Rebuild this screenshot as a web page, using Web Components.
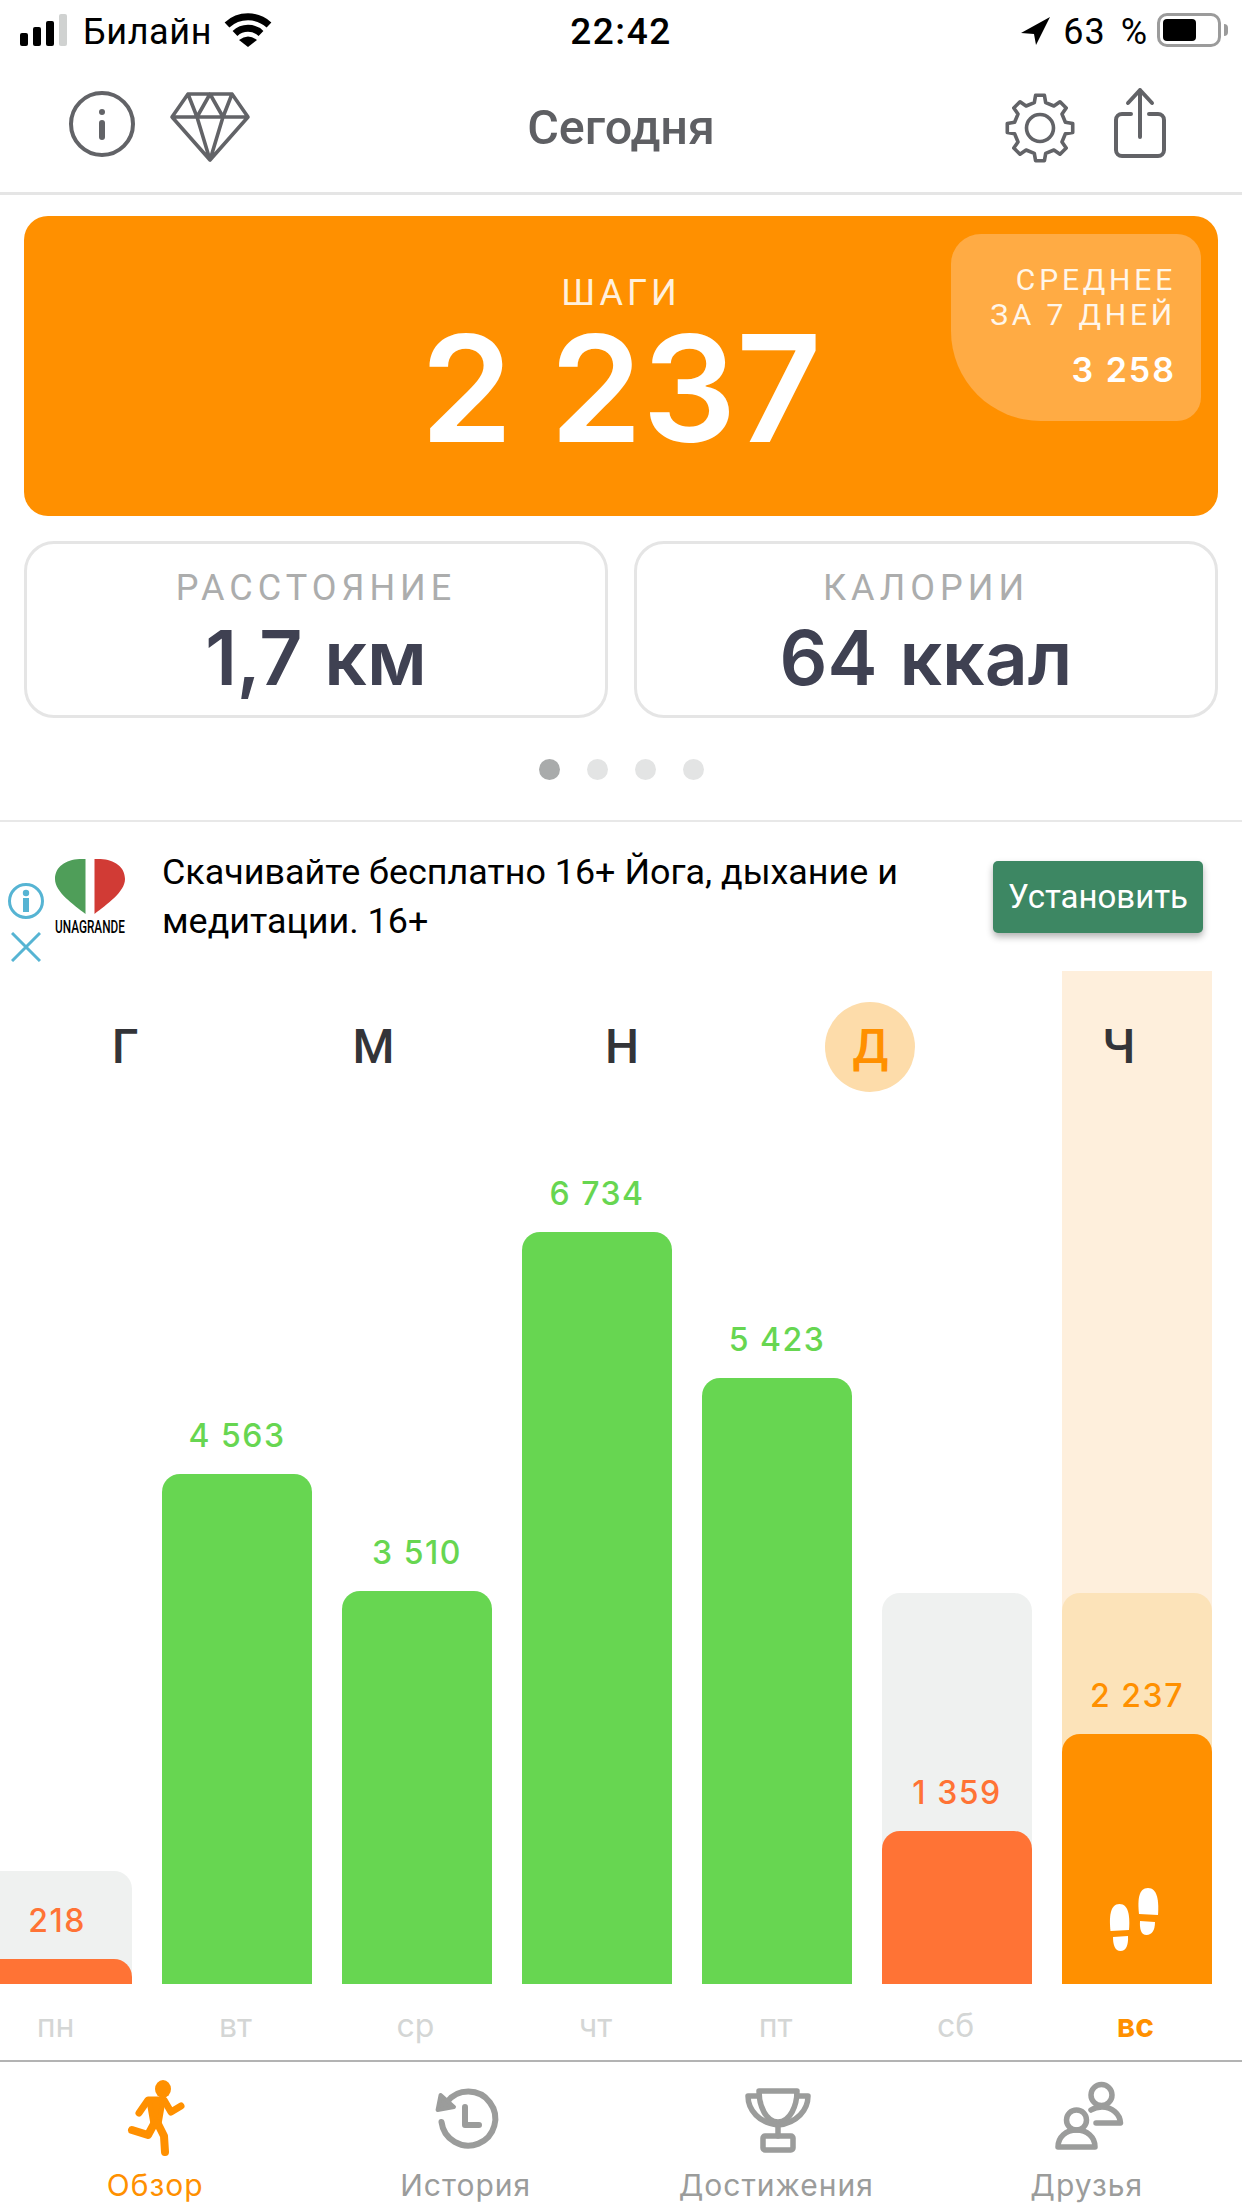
<!DOCTYPE html>
<html lang="ru">
<head>
<meta charset="utf-8">
<title>Сегодня</title>
<style>
  html, body { margin: 0; padding: 0; background: #fff; }
  body { width: 1242px; height: 2208px; overflow: hidden; font-family: Roboto, "Liberation Sans", sans-serif; }
  .stats { display: grid; grid-template-columns: 584px 584px; gap: 26px; padding: 25px 24px 0; }
</style>
</head>
<body>
<status-bar></status-bar>
<nav-bar title="Сегодня"></nav-bar>
<step-card value="2 237" avg="3 258"></step-card>
<div class="stats">
  <stat-card label="РАССТОЯНИЕ" value="1,7 км"></stat-card>
  <stat-card label="КАЛОРИИ" value="64 ккал"></stat-card>
</div>
<pager-dots count="4"></pager-dots>
<ad-banner></ad-banner>
<week-chart>
  <day-col kind="low" value="218" goal="113" bar="25"></day-col>
  <day-col kind="ok" value="4 563" bar="510"></day-col>
  <day-col kind="ok" value="3 510" bar="393"></day-col>
  <day-col kind="ok" value="6 734" bar="752"></day-col>
  <day-col kind="ok" value="5 423" bar="606"></day-col>
  <day-col kind="low" value="1 359" goal="391" bar="153"></day-col>
  <day-col kind="today" value="2 237" goal="391" bar="250"></day-col>
</week-chart>
<day-labels></day-labels>
<tab-bar>
  <tab-item label="Обзор" icon="run" active></tab-item>
  <tab-item label="История" icon="history"></tab-item>
  <tab-item label="Достижения" icon="cup"></tab-item>
  <tab-item label="Друзья" icon="friends"></tab-item>
</tab-bar>

<script>
const UI_FONT = 'Roboto, "Liberation Sans", sans-serif';
const NUM_FONT = 'Inter, Roboto, sans-serif';

class StatusBar extends HTMLElement {
  connectedCallback() {
    this.attachShadow({ mode: 'open' });
    this.shadowRoot.innerHTML = `
      <style>
        :host { display: grid; grid-template-columns: 1fr auto 1fr; height: 60px; align-items: start; font-family: ${UI_FONT}; color: #000; }
        .left, .right { display: flex; align-items: flex-start; height: 60px; }
        .left { padding-left: 20px; }
        .right { justify-content: flex-end; padding-right: 14px; }
        .bars { display: flex; align-items: flex-end; gap: 5px; height: 32px; margin-top: 14px; }
        .bars i { display: block; width: 8px; background: #000; border-radius: 2px; }
        .bars i:last-child { background: #d0d2d1; }
        .carrier { font-size: 36px; line-height: 42px; margin: 11px 0 0 16px; letter-spacing: .6px; }
        .wifi { margin: 11px 0 0 12px; }
        .time { font-size: 37px; font-weight: 500; line-height: 42px; margin-top: 11px; letter-spacing: 1.500px; }
        .loc { margin: 15px 12px 0 0; }
        .pct { font-size: 36px; line-height: 42px; margin: 11px 9px 0 0; letter-spacing: 1px; word-spacing: 5px; }
        .batt { box-sizing: border-box; width: 64px; height: 34px; margin-top: 13px; border: 3px solid #9b9b9b; border-radius: 10px; padding: 3px; }
        .batt b { display: block; width: 33px; height: 22px; background: #000; border-radius: 4px; }
        .nub { width: 4px; height: 12px; margin: 24px 0 0 3px; background: #9b9b9b; border-radius: 0 6px 6px 0; }
      </style>
      <div class="left">
        <div class="bars"><i style="height:13px"></i><i style="height:19px"></i><i style="height:25px"></i><i style="height:32px"></i></div>
        <span class="carrier">Билайн</span>
        <svg class="wifi" width="48" height="38" viewBox="0 0 48 38">
          <path d="M3 14A31 31 0 0 1 45 14M11 22.500A19 19 0 0 1 37 22.500" fill="none" stroke="#000" stroke-width="7"/>
          <path d="M15 29Q24 22 33 29L24 36Z" fill="#000"/>
        </svg>
      </div>
      <div class="time">22:42</div>
      <div class="right">
        <svg class="loc" width="32" height="32" viewBox="0 0 32 32"><path d="M31 2L2 18L15 19L17 30Z" fill="#000"/></svg>
        <span class="pct">63 %</span>
        <div class="batt"><b></b></div><div class="nub"></div>
      </div>`;
  }
}
customElements.define('status-bar', StatusBar);

function gearPath(cx, cy, rIn, rOut, teeth) {
  const step = Math.PI * 2 / teeth;
  let d = '';
  for (let i = 0; i < teeth; i++) {
    const a = i * step - Math.PI / 2;
    const pts = [[rIn, a - step * .28], [rOut, a - step * .17], [rOut, a + step * .17], [rIn, a + step * .28]];
    pts.forEach(([r, t], n) => {
      const x = (cx + r * Math.cos(t)).toFixed(1), y = (cy + r * Math.sin(t)).toFixed(1);
      d += (i === 0 && n === 0 ? 'M' : 'L') + x + ' ' + y;
    });
  }
  return d + 'Z';
}

class NavBar extends HTMLElement {
  connectedCallback() {
    this.attachShadow({ mode: 'open' });
    this.shadowRoot.innerHTML = `
      <style>
        :host { display: block; box-sizing: border-box; height: 135px; border-bottom: 3px solid #e5e5e5; font-family: ${UI_FONT}; color: #5e5f63; }
        .row { display: grid; grid-template-columns: 1fr auto 1fr; height: 132px; }
        .title { font-size: 48.500px; font-weight: 500; line-height: 132px; margin-top: 2px; }
        .l, .r { display: flex; align-items: flex-start; }
        .l { padding: 31px 0 0 68px; gap: 32px; }
        .r { justify-content: flex-end; padding: 26px 74px 0 0; gap: 36px; }
        svg { display: block; fill: none; stroke: #626367; stroke-linecap: round; stroke-linejoin: round; }
      </style>
      <div class="row">
        <div class="l">
          <svg width="68" height="68" viewBox="0 0 68 68" stroke-width="4">
            <circle cx="34" cy="33" r="31"/>
            <circle cx="34" cy="21" r="3" fill="#626367" stroke="none"/>
            <path d="M34 32V46" stroke-width="6"/>
          </svg>
          <svg width="84" height="72" viewBox="0 0 84 72" stroke-width="3.600">
            <path d="M20 3H64L80 26L42 69L4 26ZM4 26H80M20 3L29 26L42 3L55 26L64 3M29 26L42 69L55 26"/>
          </svg>
        </div>
        <div class="title">${this.getAttribute('title')}</div>
        <div class="r">
          <svg style="margin-top:6px" width="72" height="72" viewBox="0 0 72 72" stroke-width="3.600">
            <path d="${gearPath(36, 36, 26, 33, 8)}"/>
            <circle cx="36" cy="36" r="13.500"/>
          </svg>
          <svg width="56" height="74" viewBox="0 0 56 74" stroke-width="4">
            <path d="M28 4V51M16 17L28 4L40 17"/>
            <path d="M19 28H10A6 6 0 0 0 4 34V64A6 6 0 0 0 10 70H46A6 6 0 0 0 52 64V34A6 6 0 0 0 46 28H37"/>
          </svg>
        </div>
      </div>`;
  }
}
customElements.define('nav-bar', NavBar);

class StepCard extends HTMLElement {
  connectedCallback() {
    this.attachShadow({ mode: 'open' });
    this.shadowRoot.innerHTML = `
      <style>
        :host { display: block; position: relative; box-sizing: border-box; height: 300px; margin: 21px 24px 0; background: #ff9000; border-radius: 24px; color: #fff; font-family: ${NUM_FONT}; text-align: center; }
        .cap { padding-top: 57px; font-size: 36px; line-height: 40px; letter-spacing: 4px; color: #fff0dd; font-family: ${UI_FONT}; }
        .num { font-size: 148px; line-height: 150px; font-weight: 600; margin-top: 1px; }
        .avg { position: absolute; box-sizing: border-box; top: 18px; right: 17px; width: 250px; height: 187px; background: #ffab44; border-radius: 30px 24px 24px 90px; padding: 28px 25px 0 0; text-align: right; font-family: ${UI_FONT}; font-size: 30px; line-height: 35px; letter-spacing: 3.800px; color: #fff6ea; }
        .avg b { display: block; margin-top: 18px; font-size: 34px; line-height: 40px; font-weight: 600; letter-spacing: 2px; color: #fff; font-family: ${NUM_FONT}; }
      </style>
      <div class="cap">ШАГИ</div>
      <div class="num">${this.getAttribute('value')}</div>
      <div class="avg">СРЕДНЕЕ<br>ЗА 7 ДНЕЙ<b>${this.getAttribute('avg')}</b></div>`;
  }
}
customElements.define('step-card', StepCard);

class StatCard extends HTMLElement {
  connectedCallback() {
    this.attachShadow({ mode: 'open' });
    this.shadowRoot.innerHTML = `
      <style>
        :host { display: block; box-sizing: border-box; height: 177px; border: 3px solid #e5e5e5; border-radius: 30px; text-align: center; font-family: ${UI_FONT}; }
        .l { padding-top: 23px; font-size: 36px; line-height: 42px; letter-spacing: 5px; color: #acadad; }
        .v { font-family: ${NUM_FONT}; font-size: 75px; font-weight: 600; line-height: 90px; margin-top: 4px; color: #3f4152; word-spacing: 3px; }
      </style>
      <div class="l">${this.getAttribute('label')}</div>
      <div class="v">${this.getAttribute('value')}</div>`;
  }
}
customElements.define('stat-card', StatCard);

class PagerDots extends HTMLElement {
  connectedCallback() {
    this.attachShadow({ mode: 'open' });
    const n = parseInt(this.getAttribute('count') || '4', 10);
    this.shadowRoot.innerHTML = `
      <style>
        :host { display: flex; justify-content: center; gap: 27px; box-sizing: border-box; height: 104px; padding-top: 41px; border-bottom: 2px solid #e8e8e8; }
        i { display: block; width: 21px; height: 21px; border-radius: 50%; background: #e3e4e4; }
        i:first-of-type { background: #a9abab; }
      </style>
      ${'<i></i>'.repeat(n)}`;
  }
}
customElements.define('pager-dots', PagerDots);

class AdBanner extends HTMLElement {
  connectedCallback() {
    this.attachShadow({ mode: 'open' });
    this.shadowRoot.innerHTML = `
      <style>
        :host { display: flex; box-sizing: border-box; height: 149px; font-family: ${UI_FONT}; color: #000; }
        .side { flex: none; width: 55px; padding: 61px 0 0 8px; box-sizing: border-box; }
        svg { display: block; }
        .logo { flex: none; width: 107px; padding-top: 37px; box-sizing: border-box; }
        .logo span { display: block; width: 70px; margin-top: 3px; font-size: 19px; line-height: 20px; font-weight: 500; white-space: nowrap; transform: scaleX(.62); transform-origin: left center; }
        .txt { flex: none; width: 770px; padding-top: 26px; font-size: 35.900px; line-height: 49px; }
        .btn { flex: none; margin: 39px 0 0 61px; width: 210px; height: 72px; box-sizing: border-box; background: #3d8763; color: #fff; border-radius: 5px; text-align: center; font-size: 33px; line-height: 72px; box-shadow: 0 4px 7px rgba(0,0,0,.3); }
      </style>
      <div class="side">
        <svg width="36" height="36" viewBox="0 0 36 36"><circle cx="18" cy="18" r="16.500" fill="none" stroke="#56b4d3" stroke-width="3"/><circle cx="18" cy="10" r="3.200" fill="#56b4d3"/><rect x="15" y="15" width="6" height="14" fill="#56b4d3"/></svg>
        <svg style="margin:13px 0 0 3px" width="30" height="30" viewBox="0 0 30 30"><path d="M1 1L29 29M29 1L1 29" stroke="#56b4d3" stroke-width="3"/></svg>
      </div>
      <div class="logo">
        <svg width="70" height="55" viewBox="0 0 70 55"><path d="M30.500 0C14 -1 0 6 0 20C0 33 18 45 30.500 55Z" fill="#4f9e59"/><path d="M39.500 0C56 -1 70 6 70 20C70 33 52 45 39.500 55Z" fill="#d13b35"/></svg>
        <span>UNAGRANDE</span>
      </div>
      <div class="txt">Скачивайте бесплатно 16+ Йога, дыхание и медитации. 16+</div>
      <div class="btn">Установить</div>`;
  }
}
customElements.define('ad-banner', AdBanner);

class WeekChart extends HTMLElement {
  connectedCallback() {
    this.attachShadow({ mode: 'open' });
    const letters = ['Г', 'М', 'Н', 'Д', 'Ч'];
    this.shadowRoot.innerHTML = `
      <style>
        :host { display: block; position: relative; height: 1013px; overflow: hidden; font-family: ${UI_FONT}; }
        .cols { display: grid; grid-template-columns: repeat(7, 150px); gap: 30px; height: 100%; margin-left: -18px; }
        .letters { position: absolute; top: 31px; left: 1px; right: -1px; display: grid; grid-template-columns: repeat(5, 1fr); justify-items: center; font-size: 48px; font-weight: 500; line-height: 90px; color: #333438; }
        .letters span { display: block; width: 90px; height: 90px; text-align: center; border-radius: 50%; }
        .letters .on { background: #fddcaa; color: #ff9000; }
      </style>
      <div class="cols"><slot></slot></div>
      <div class="letters">${letters.map(l => `<span class="${l === 'Д' ? 'on' : ''}">${l}</span>`).join('')}</div>`;
  }
}
customElements.define('week-chart', WeekChart);

class DayCol extends HTMLElement {
  connectedCallback() {
    this.attachShadow({ mode: 'open' });
    const kind = this.getAttribute('kind');
    const goal = this.getAttribute('goal');
    const bar = this.getAttribute('bar');
    const colors = {
      ok: ['#67d651', 'transparent', 'transparent'],
      low: ['#ff7335', '#eff1f0', 'transparent'],
      today: ['#ff9000', '#fce3b9', '#feefdc'],
    }[kind];
    this.shadowRoot.innerHTML = `
      <style>
        :host { display: flex; flex-direction: column; justify-content: flex-end; height: 100%; background: ${colors[2]}; font-family: ${NUM_FONT}; }
        .goal { display: flex; flex-direction: column; justify-content: flex-end; background: ${colors[1]}; border-radius: 18px 18px 0 0; ${goal ? `height:${goal}px;` : ''} }
        .val { text-align: center; font-size: 32px; line-height: 40px; margin-bottom: 18px; letter-spacing: 1.500px; font-weight: 500; color: ${colors[0]}; }
        .bar { position: relative; height: ${bar}px; background: ${colors[0]}; border-radius: 18px 18px 0 0; }
        svg { position: absolute; left: 47px; bottom: 32px; }
      </style>
      <div class="goal">
        <div class="val">${this.getAttribute('value')}</div>
        <div class="bar">${kind === 'today' ? `
          <svg width="50" height="65" viewBox="0 0 50 65" fill="#fff">
            <path d="M1.500 44C0 30 1 17 10.500 17C20 17 21 30 20 43Z"/>
            <path d="M4 50L19 49C19.500 58 17 64 11.500 64C6 64 4 58 4 50Z"/>
            <path d="M30 27C28.500 13 29.500 1 39 1C48.500 1 50 14 49 28Z"/>
            <path d="M31 34L46 35C46 43 43 48 37.500 48C32 48 30.500 42 31 34Z"/>
          </svg>` : ''}</div>
      </div>`;
  }
}
customElements.define('day-col', DayCol);

class DayLabels extends HTMLElement {
  connectedCallback() {
    this.attachShadow({ mode: 'open' });
    const days = ['пн', 'вт', 'ср', 'чт', 'пт', 'сб', 'вс'];
    this.shadowRoot.innerHTML = `
      <style>
        :host { display: grid; grid-template-columns: repeat(7, 150px); gap: 30px; margin-left: -18px; box-sizing: border-box; height: 76px; font-family: ${NUM_FONT}; font-size: 32px; line-height: 84px; color: #d4d6d5; text-align: center; }
        span { padding-right: 3px; }
        span:last-child { color: #ff9000; font-weight: 700; }
      </style>
      ${days.map(d => `<span>${d}</span>`).join('')}`;
  }
}
customElements.define('day-labels', DayLabels);

class TabBar extends HTMLElement {
  connectedCallback() {
    this.attachShadow({ mode: 'open' });
    this.shadowRoot.innerHTML = `
      <style>
        :host { display: grid; grid-template-columns: repeat(4, 1fr); box-sizing: border-box; height: 148px; border-top: 2px solid #b3b3b3; }
      </style>
      <slot></slot>`;
  }
}
customElements.define('tab-bar', TabBar);

// each icon: svg markup plus its top offset inside the 100px icon slot
const TAB_ICONS = {
  run: [18, `<svg width="60" height="76" viewBox="0 0 60 76" fill="none" stroke="#ff9000" stroke-linecap="round" stroke-linejoin="round">
    <ellipse cx="36" cy="9" rx="8" ry="9" fill="#ff9000" stroke="none"/>
    <path d="M12 33L21 20H37L44 32L54 26" stroke-width="7"/>
    <path d="M22 21H36L32 44H26Z" fill="#ff9000" stroke-width="5"/>
    <path d="M27 44L21 55L5 50" stroke-width="8"/>
    <path d="M31 44L37 56L38 72" stroke-width="8"/>
  </svg>`],
  history: [23, `<svg width="70" height="70" viewBox="0 0 70 70" fill="none" stroke="#9b9c9b" stroke-width="6" stroke-linecap="round" stroke-linejoin="round">
    <path d="M8.500 37A27 27 0 1 0 14 17"/>
    <path d="M7.600 10L21 22L4.600 25Z" fill="#9b9c9b" stroke-width="4"/>
    <path d="M32 22V40H46"/>
  </svg>`],
  cup: [24, `<svg width="68" height="68" viewBox="0 0 68 68" fill="none" stroke="#9b9c9b" stroke-width="5.500" stroke-linecap="round" stroke-linejoin="round">
    <path d="M15 5H53M15 5C15 20 22 36 34 36C46 36 53 20 53 5"/>
    <path d="M15 10H4C4 24 15 37 34 39C53 37 64 24 64 10H53"/>
    <path d="M34 40V50"/>
    <rect x="19" y="50" width="30" height="14" rx="2"/>
  </svg>`],
  friends: [18, `<svg width="74" height="74" viewBox="0 0 74 74" fill="none" stroke="#9b9c9b" stroke-width="5.500" stroke-linecap="round" stroke-linejoin="round">
    <circle cx="49.500" cy="15" r="10.500"/>
    <path d="M39 30C42 28 46 27 50 27C60 27 68 34 68.500 43H44"/>
    <circle cx="24.500" cy="40" r="10"/>
    <path d="M6 67C6 57 14 50 24.500 50C35 50 43 57 43 67Z"/>
  </svg>`],
};

class TabItem extends HTMLElement {
  connectedCallback() {
    this.attachShadow({ mode: 'open' });
    const active = this.hasAttribute('active');
    const [top, svg] = TAB_ICONS[this.getAttribute('icon')];
    this.shadowRoot.innerHTML = `
      <style>
        :host { display: flex; flex-direction: column; align-items: center; font-family: ${NUM_FONT}; }
        .ico { height: 100px; padding: ${top}px 0 0 4px; box-sizing: border-box; }
        .lab { font-size: 30px; line-height: 36px; letter-spacing: 1px; margin-top: 5px; color: ${active ? '#ff9000' : '#9b9c9b'}; }
      </style>
      <div class="ico">${svg}</div>
      <div class="lab">${this.getAttribute('label')}</div>`;
  }
}
customElements.define('tab-item', TabItem);
</script>
</body>
</html>
